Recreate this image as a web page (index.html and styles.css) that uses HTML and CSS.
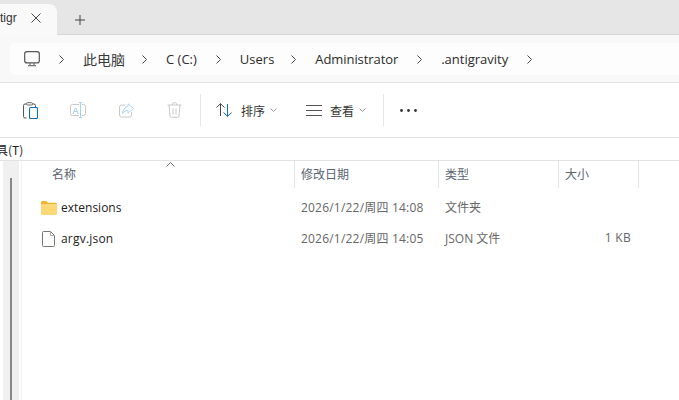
FILE: index.html
```
<!DOCTYPE html>
<html lang="zh">
<head>
<meta charset="utf-8">
<title>.antigravity</title>
<link rel="stylesheet" href="styles.css">
</head>
<body>
<div class="window">
  <div class="tabbar">
    <div class="tab">
      <span class="tab-title">tigr</span>
      <svg class="tab-close" width="10" height="10" viewBox="0 0 10 10"><path d="M.5.5l9 9M9.500.5l-9 9" stroke="#444" fill="none"/></svg>
    </div>
    <svg class="tab-add" width="10" height="10" viewBox="0 0 10 10"><path d="M5 0v10M0 5h10" stroke="#444" fill="none"/></svg>
  </div>
  <div class="addressrow">
    <div class="address">
      <svg class="pc" width="16" height="16" viewBox="0 0 16 16"><rect x=".7" y=".7" width="14.6" height="11.2" rx="2.2" fill="none" stroke="#555" stroke-width="1.2"/><path d="M4 14.6h8M6 12v2.5M10 12v2.5" stroke="#777" stroke-width="1.2" fill="none"/></svg>
      <svg class="chev" width="5" height="9" viewBox="0 0 5 9"><path d="M.5.5l4 4-4 4" fill="none" stroke="#444"/></svg>
      <span class="crumb c1">此电脑</span>
      <svg class="chev" width="5" height="9" viewBox="0 0 5 9"><path d="M.5.5l4 4-4 4" fill="none" stroke="#444"/></svg>
      <span class="crumb">C (C:)</span>
      <svg class="chev" width="5" height="9" viewBox="0 0 5 9"><path d="M.5.5l4 4-4 4" fill="none" stroke="#444"/></svg>
      <span class="crumb c3">Users</span>
      <svg class="chev" width="5" height="9" viewBox="0 0 5 9"><path d="M.5.5l4 4-4 4" fill="none" stroke="#444"/></svg>
      <span class="crumb c4">Administrator</span>
      <svg class="chev" width="5" height="9" viewBox="0 0 5 9"><path d="M.5.5l4 4-4 4" fill="none" stroke="#444"/></svg>
      <span class="crumb">.antigravity</span>
      <svg class="chev" width="5" height="9" viewBox="0 0 5 9"><path d="M.5.5l4 4-4 4" fill="none" stroke="#444"/></svg>
    </div>
  </div>
  <div class="toolbar">
    <svg class="tool t-paste" width="15" height="17" viewBox="0 0 15 17"><path d="M3.500 16H2a1.500 1.500 0 0 1-1.500-1.500V3.500A1.500 1.500 0 0 1 2 2h1.500M9.500 2H11a1.500 1.500 0 0 1 1.500 1.500V5" fill="none" stroke="#555"/><rect x="3.500" y=".7" width="6" height="2.300" rx="1" fill="none" stroke="#666"/><rect x="6.500" y="5.500" width="8" height="11" rx="1.300" fill="none" stroke="#0f6cbd" stroke-width="1.100"/></svg>
    <svg class="tool t-rename" width="16" height="17" viewBox="0 0 16 17"><rect x=".5" y="2.500" width="15" height="11" rx="2" fill="none" stroke="#c8c8c8"/><rect x="9" y="1" width="3" height="15" fill="#fff"/><path d="M10.500.5v15M9 .5h3M9 15.500h3" stroke="#a9d3f5" fill="none"/><text x="2.500" y="11.500" class="rename-a">A</text></svg>
    <svg class="tool t-share" width="15" height="15" viewBox="0 0 15 15"><path d="M6 2H2.500A2 2 0 0 0 .5 4v8a2 2 0 0 0 2 2h8a2 2 0 0 0 2-2V9" fill="none" stroke="#c8c8c8"/><path d="M9 .8l5.500 4.700L9 10V7.500C6.500 7.500 4.800 8.500 3.500 10.500 3.800 7 5.800 4 9 3.500z" fill="#fff" stroke="#a9d3f5"/></svg>
    <svg class="tool t-trash" width="15" height="16" viewBox="0 0 15 16"><path d="M.5 3h14M5.500 3V2a1.200 1.200 0 0 1 1.200-1.200h1.600A1.200 1.200 0 0 1 9.500 2v1M2 3l1 11a1.500 1.500 0 0 0 1.500 1.300h6A1.500 1.500 0 0 0 12 14l1-11M6 6.500v6M9 6.500v6" fill="none" stroke="#c8c8c8"/></svg>
    <span class="vsep s1"></span>
    <svg class="sort-ic" width="16" height="14" viewBox="0 0 16 14"><path d="M.5 4.500L4.500.7l4 3.800M4.500.7V13" fill="none" stroke="#444"/><path d="M7.500 9.500l4 3.800 4-3.800M11.500 13.300V1" fill="none" stroke="#0f6cbd"/></svg>
    <span class="tool-label">排序</span>
    <svg class="caret" width="7" height="4" viewBox="0 0 7 4"><path d="M.5.5l3 3 3-3" fill="none" stroke="#999"/></svg>
    <svg class="view-ic" width="16" height="11" viewBox="0 0 16 11"><path d="M0 .5h16M0 5.500h16M0 10.500h16" stroke="#555" fill="none"/></svg>
    <span class="tool-label view-label">查看</span>
    <svg class="caret" width="7" height="4" viewBox="0 0 7 4"><path d="M.5.5l3 3 3-3" fill="none" stroke="#999"/></svg>
    <span class="vsep s2"></span>
    <svg class="more" width="17" height="3" viewBox="0 0 17 3"><circle cx="1.500" cy="1.500" r="1.400"/><circle cx="8.500" cy="1.500" r="1.400"/><circle cx="15.500" cy="1.500" r="1.400"/></svg>
  </div>
  <div class="menubar"><span class="menu-item">具(T)</span></div>
  <div class="main">
    <div class="nav"><div class="nav-track"><div class="nav-thumb"></div></div></div>
    <div class="files">
      <div class="head">
        <svg class="sort-mark" width="9" height="5" viewBox="0 0 9 5"><path d="M.5 4.500l4-4 4 4" fill="none" stroke="#777"/></svg>
        <div class="col c-name hd-name">名称</div>
        <div class="col c-date">修改日期</div>
        <div class="col c-type">类型</div>
        <div class="col c-size">大小</div>
      </div>
      <div class="row r1">
        <div class="c-name cell-name">
          <svg class="ficon" width="16" height="14" viewBox="0 0 16 14"><path d="M0 1.500A1.500 1.500 0 0 1 1.500 0h3.700L7 1.800h7.500A1.500 1.500 0 0 1 16 3.300V5H0z" fill="#f2b32a"/><path d="M0 3.500h16v9A1.500 1.500 0 0 1 14.500 14h-13A1.500 1.500 0 0 1 0 12.500z" fill="#fbd873"/><path d="M0 3.500h16v1H0z" fill="#f9e29a"/></svg>
          <span>extensions</span>
        </div>
        <div class="c-date cell">2026/1/22/周四 14:08</div>
        <div class="c-type cell">文件夹</div>
        <div class="c-size cell"></div>
      </div>
      <div class="row r2">
        <div class="c-name cell-name">
          <svg class="ficon" width="16" height="16" viewBox="0 0 16 16"><path d="M2.500.5h7l4 4v10a1 1 0 0 1-1 1h-10a1 1 0 0 1-1-1v-13a1 1 0 0 1 1-1z" fill="#fff" stroke="#777"/><path d="M9.500.5v4h4" fill="none" stroke="#aaa"/></svg>
          <span class="argv">argv.json</span>
        </div>
        <div class="c-date cell">2026/1/22/周四 14:05</div>
        <div class="c-type cell">JSON 文件</div>
        <div class="c-size cell right">1 KB</div>
      </div>
    </div>
  </div>
</div>
</body>
</html>
```
FILE: styles.css
```
* { box-sizing: border-box; }
html, body { margin: 0; height: 100%; overflow: hidden; background: #fff; }
body { font-family: "Noto Sans CJK SC", "Liberation Sans", sans-serif; font-size: 12px; color: #1f1f1f; }
.window { width: 679px; height: 400px; display: flex; flex-direction: column; overflow: hidden; }

.tabbar { height: 35px; flex: none; display: flex; align-items: flex-start; background: #e6e6e6; border-bottom: 1px solid #d6d6d6; }
.tab { width: 57px; height: 35px; flex: none; background: #f9f9f9; border-top-right-radius: 8px; margin-top: 4px; display: flex; align-items: center; padding-bottom: 8px; }
.tab-title { width: 17px; flex: none; overflow: hidden; font-family: "Liberation Sans", sans-serif; font-size: 12px; color: #333; white-space: nowrap; }
.tab-close { margin-left: 14px; }
.tab-add { margin: 15px 0 0 18px; }

.addressrow { height: 48px; flex: none; background: #f8f8f8; border-bottom: 1px solid #e0e0e0; padding: 8px 0 7px 10px; }
.address { height: 32px; background: #fdfdfd; border-radius: 5px 0 0 5px; display: flex; align-items: center; padding-left: 14px; }
.pc { margin-right: 19px; }
.chev { flex: none; }
.crumb { font-family: "Open Sans", "Noto Sans CJK SC", sans-serif; font-size: 13px; color: #2b2b2b; margin: 0 19px; white-space: nowrap; }
.c1 { font-size: 14px; margin-right: 17px; color: #3a3a3a; }
.c3 { margin-right: 17px; }
.c4 { letter-spacing: -.08px; }

.toolbar { height: 55px; flex: none; background: #fff; border-bottom: 1px solid #e2e2e2; display: flex; align-items: center; }
.tool { flex: none; }
.t-paste { margin-left: 23px; }
.t-rename { margin-left: 32px; }
.t-share { margin-left: 33px; }
.t-trash { margin-left: 33px; }
.rename-a { font-family: "Liberation Sans", sans-serif; font-size: 9px; fill: #7fb7e6; }
.vsep { width: 1px; height: 32px; background: #e6e6e6; flex: none; }
.s1 { margin-left: 18px; }
.sort-ic { margin-left: 15px; flex: none; }
.tool-label { margin-left: 9px; color: #333; font-size: 12px; }
.view-label { margin-left: 8px; }
.caret { margin-left: 5px; flex: none; }
.view-ic { margin-left: 29px; flex: none; }
.s2 { margin-left: 17px; }
.more { margin-left: 16px; flex: none; fill: #333; }

.menubar { height: 23px; flex: none; border-bottom: 1px solid #e2e2e2; overflow: hidden; display: flex; align-items: center; }
.menu-item { margin-left: -4px; font-size: 12px; color: #222; }

.main { flex: 1; display: flex; min-height: 0; }
.nav { width: 22px; flex: none; border-right: 1px solid #f0f0f0; padding-left: 3px; }
.nav-track { width: 16px; height: 100%; background: #f0f0f0; padding: 17px 0 0 7px; }
.nav-thumb { width: 2px; height: 100%; background: #888; }

.files { flex: 1; position: relative; font-family: "Noto Sans CJK SC", sans-serif; }
.head { height: 27px; display: flex; color: #5a6472; font-size: 12px; line-height: 26px; }
.sort-mark { position: absolute; left: 144px; top: 1px; }
.col { height: 27px; border-right: 1px solid #e5e5e5; padding-left: 6px; }
.hd-name { padding-left: 30px; border-right: 1px solid #e5e5e5; }
.c-name { width: 273px; flex: none; }
.c-date { width: 144px; flex: none; }
.c-type { width: 120px; flex: none; }
.c-size { width: 80px; flex: none; }

.row { height: 31px; display: flex; align-items: center; }
.r1 { margin-top: 4px; }
.cell { padding-left: 6px; margin-bottom: 2px; color: #666; font-family: "Open Sans", "Noto Sans CJK SC", sans-serif; font-size: 12px; letter-spacing: .2px; white-space: nowrap; }
.c-type.cell { letter-spacing: 0; }
.right { text-align: right; padding-right: 8px; letter-spacing: .3px; }
.cell-name { display: flex; align-items: center; padding-left: 19px; color: #222; font-family: "Open Sans", sans-serif; font-size: 12px; }
.cell-name span { margin-left: 4px; }
.cell-name .argv { letter-spacing: .2px; }
.ficon { flex: none; }
```
